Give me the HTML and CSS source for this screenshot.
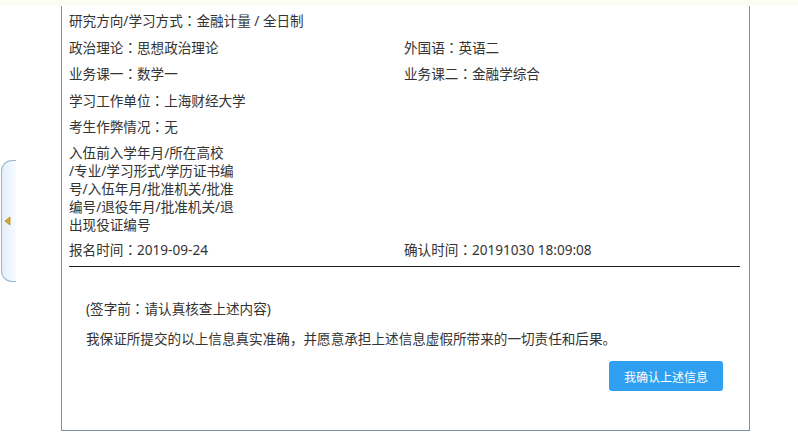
FILE: index.html
```html
<!DOCTYPE html>
<html>
<head>
    <title>报名信息确认</title>
    <link rel="stylesheet" href="styles.css">
</head>
<body>
    <div class="topbar"></div>
    <div class="side-tab">
        <svg width="8" height="10" viewBox="0 0 8 10">
            <path d="M1 5 L6 1 L6 9 Z" fill="#d7a92c" stroke="#b88a1a" stroke-width="0.8"/>
        </svg>
    </div>
    <div class="panel">
        <div class="info">
            <div class="row full">研究方向/学习方式<span class="colon">：</span>金融计量 / 全日制</div>
            <div class="row">政治理论<span class="colon">：</span>思想政治理论</div>
            <div class="row">外国语<span class="colon">：</span>英语二</div>
            <div class="row">业务课一<span class="colon">：</span>数学一</div>
            <div class="row">业务课二<span class="colon">：</span>金融学综合</div>
            <div class="row full">学习工作单位<span class="colon">：</span>上海财经大学</div>
            <div class="row full">考生作弊情况<span class="colon">：</span>无</div>
            <div class="row full block">入伍前入学年月/所在高校<br>/专业/学习形式/学历证书编<br>号/入伍年月/批准机关/批准<br>编号/退役年月/批准机关/退<br>出现役证编号</div>
            <div class="row">报名时间<span class="colon">：</span>2019-09-24</div>
            <div class="row">确认时间<span class="colon">：</span>20191030 18:09:08</div>
        </div>
        <div class="sign">
            <p class="note">(签字前<span class="colon">：</span>请认真核查上述内容)</p>
            <p class="pledge">我保证所提交的以上信息真实准确，并愿意承担上述信息虚假所带来的一切责任和后果。</p>
            <div class="actions">
                <button class="confirm">我确认上述信息</button>
            </div>
        </div>
    </div>
</body>
</html>
```

FILE: styles.css
```css
body {
    margin: 0;
    background-color: #ffffff;
    font-family: "Noto Sans", "Noto Sans CJK SC", sans-serif;
    color: #333333;
    font-size: 13.6px;
}

.topbar {
    height: 6px;
    background-color: #fdfcf4;
}

.side-tab {
    position: absolute;
    left: 1px;
    top: 160px;
    width: 14px;
    height: 120px;
    border: 1px solid #9bb6d2;
    border-right: none;
    border-radius: 11px 0 0 11px;
    background: linear-gradient(to right, #e3eefa, #f7fbff);
    display: flex;
    align-items: center;
}

.side-tab svg {
    display: block;
    margin-left: 2px;
}

.panel {
    margin-left: 61px;
    width: 671px;
    height: 419px;
    border: 1px solid #7a94a3;
    border-top: none;
    padding: 5px 9px 0 7px;
}

.info {
    display: grid;
    grid-template-columns: 335px 1fr;
    border-bottom: 1px solid #222222;
}

/* fixed heights: mixed latin/cjk fonts would otherwise grow the line box */
.row {
    height: 18px;
    line-height: 18px;
    margin-bottom: 8.5px;
    white-space: nowrap;
}

.row.full {
    grid-column: 1 / 3;
}

.row.block {
    height: 90px;
    margin-bottom: 6px;
}

.colon {
    font-family: "Noto Sans CJK TC", sans-serif;
}

.sign {
    padding: 32px 17px 0 17px;
}

.note {
    margin: 0;
    height: 18px;
    line-height: 18px;
}

.pledge {
    margin: 13px 0 0 0;
    height: 18px;
    line-height: 18px;
}

.actions {
    display: flex;
    justify-content: flex-end;
    margin-top: 13px;
}

.confirm {
    width: 114px;
    height: 30px;
    border: none;
    border-radius: 3px;
    background-color: #2f9ff0;
    color: #ffffff;
    font-family: "Noto Sans CJK SC", sans-serif;
    font-size: 12px;
    cursor: pointer;
}
```
